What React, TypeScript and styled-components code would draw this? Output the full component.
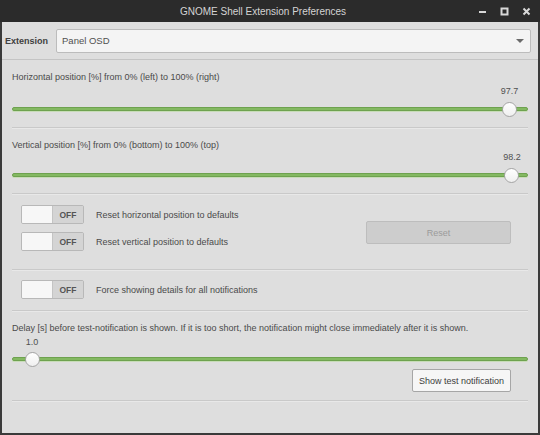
import styled, { createGlobalStyle } from "styled-components";

const Global = createGlobalStyle`
  html, body {
    margin: 0;
    padding: 0;
    background: #dedede;
  }
  * {
    box-sizing: border-box;
  }
`;

const Window = styled.div`
  width: 540px;
  height: 435px;
  display: flex;
  flex-direction: column;
  font-family: "Liberation Sans", Arial, sans-serif;
  color: #454545;
  overflow: hidden;
`;

const TitleBar = styled.div`
  height: 22px;
  flex: none;
  background: #2b2b2b;
  display: flex;
  align-items: center;
  position: relative;
`;

const Title = styled.div`
  flex: 1;
  text-align: center;
  padding-right: 14px;
  font-size: 10px;
  color: #d4d4d4;
`;

const WindowButtons = styled.div`
  position: absolute;
  right: 9px;
  top: 0;
  height: 22px;
  display: flex;
  align-items: center;
  gap: 13px;
`;

const WinIcon = styled.svg`
  display: block;
  width: 9px;
  height: 9px;
`;

const Body = styled.div`
  flex: 1;
  display: flex;
  flex-direction: column;
  border: 2px solid #3a3a3a;
  border-top: none;
  background: #dedede;
`;

const Header = styled.div`
  height: 38px;
  flex: none;
  display: flex;
  align-items: center;
  gap: 8px;
  padding: 0 7px 0 3px;
  border-bottom: 1px solid #c4c4c4;
`;

const HeaderLabel = styled.div`
  font-size: 9px;
  font-weight: bold;
  color: #404040;
`;

const Combo = styled.div`
  flex: 1;
  height: 24px;
  display: flex;
  align-items: center;
  justify-content: space-between;
  padding: 0 6px 0 5px;
  background: #f4f4f4;
  border: 1px solid #bcbcbc;
  border-radius: 2px;
  font-size: 9.5px;
  color: #505050;
`;

const Arrow = styled.span`
  width: 0;
  height: 0;
  border-left: 4px solid transparent;
  border-right: 4px solid transparent;
  border-top: 4px solid #6a6a6a;
`;

const Content = styled.div`
  padding: 0 10px;
  display: flex;
  flex-direction: column;
`;

const Section = styled.div<{ $top: number; $bottom: number; $indent?: number }>`
  padding: ${(p) => p.$top}px 0 ${(p) => p.$bottom}px ${(p) => p.$indent ?? 0}px;
  border-bottom: 1px solid #c9c9c9;
  box-shadow: 0 1px 0 #e8e8e8;
`;

const Label = styled.div`
  font-size: 9px;
  line-height: 12px;
  color: #4a4a4a;
  white-space: nowrap;
`;

const ScaleWrap = styled.div<{ $gap: number }>`
  position: relative;
  margin: 0 7px;
  padding-top: ${(p) => p.$gap}px;
`;

const ValueRow = styled.div`
  position: relative;
  height: 12px;
`;

const Value = styled.span`
  position: absolute;
  top: 0;
  transform: translateX(-50%);
  font-size: 9px;
  line-height: 12px;
  color: #505050;
`;

const TrackRow = styled.div<{ $gap: number }>`
  position: relative;
  height: 16px;
  margin-top: ${(p) => p.$gap}px;
`;

const Track = styled.div`
  position: absolute;
  left: -7px;
  right: -7px;
  top: 6px;
  height: 4px;
  background: #84b962;
  border: 1px solid #6ea24f;
  border-radius: 2px;
  box-shadow: 0 1px 0 #c8dcb8;
`;

const Thumb = styled.div`
  position: absolute;
  top: 1px;
  width: 15px;
  height: 15px;
  margin-left: -7.5px;
  border-radius: 50%;
  background: linear-gradient(#ffffff, #efefef);
  border: 1px solid #a4a4a4;
`;

const SwitchGrid = styled.div`
  display: flex;
  justify-content: space-between;
  align-items: flex-start;
  padding-right: 17px;
`;

const SwitchColumn = styled.div`
  display: flex;
  flex-direction: column;
  gap: 8px;
`;

const SwitchRow = styled.div`
  display: flex;
  align-items: center;
  gap: 12px;
`;

const Switch = styled.div`
  width: 63px;
  height: 19px;
  display: flex;
  border: 1px solid #b8b8b8;
  border-radius: 2px;
  overflow: hidden;
`;

const SwitchKnob = styled.div`
  width: 31px;
  background: #f7f7f7;
  border-right: 1px solid #c4c4c4;
`;

const SwitchState = styled.div`
  flex: 1;
  display: flex;
  align-items: center;
  justify-content: center;
  background: #d4d4d4;
  font-size: 8.5px;
  font-weight: bold;
  color: #555555;
`;

const Button = styled.button<{ $disabled?: boolean; $width: number }>`
  width: ${(p) => p.$width}px;
  height: 23px;
  padding: 0;
  font-family: inherit;
  font-size: 9px;
  border-radius: 2px;
  border: 1px solid ${(p) => (p.$disabled ? "#bdbdbd" : "#a6a6a6")};
  background: ${(p) => (p.$disabled ? "#cdcdcd" : "#f6f6f6")};
  color: ${(p) => (p.$disabled ? "#9b9b9b" : "#3c3c3c")};
`;

const ButtonRow = styled.div`
  display: flex;
  justify-content: flex-end;
  padding-right: 17px;
  margin-top: 2px;
`;

const ResetSlot = styled.div`
  margin-top: 16px;
`;

function Scale({ value, pct, labelGap, trackGap }: { value: string; pct: number; labelGap: number; trackGap: number }) {
  return (
    <ScaleWrap $gap={labelGap}>
      <ValueRow>
        <Value style={{ left: `${pct}%` }}>{value}</Value>
      </ValueRow>
      <TrackRow $gap={trackGap}>
        <Track />
        <Thumb style={{ left: `${pct}%` }} />
      </TrackRow>
    </ScaleWrap>
  );
}

function OffSwitch({ text }: { text: string }) {
  return (
    <SwitchRow>
      <Switch>
        <SwitchKnob />
        <SwitchState>OFF</SwitchState>
      </Switch>
      <Label>{text}</Label>
    </SwitchRow>
  );
}

export default function App() {
  return (
    <>
      <Global />
      <Window>
        <TitleBar>
          <Title>GNOME Shell Extension Preferences</Title>
          <WindowButtons>
            <WinIcon viewBox="0 0 9 9">
              <rect x="1" y="4" width="7" height="2" fill="#d8d8d8" />
            </WinIcon>
            <WinIcon viewBox="0 0 9 9">
              <rect x="1.5" y="1.5" width="6" height="6" fill="none" stroke="#d8d8d8" strokeWidth="2" />
            </WinIcon>
            <WinIcon viewBox="0 0 9 9">
              <path d="M1.5 1.5 L7.5 7.5 M7.5 1.5 L1.5 7.5" stroke="#d8d8d8" strokeWidth="2" />
            </WinIcon>
          </WindowButtons>
        </TitleBar>
        <Body>
          <Header>
            <HeaderLabel>Extension</HeaderLabel>
            <Combo>
              <span>Panel OSD</span>
              <Arrow />
            </Combo>
          </Header>
          <Content>
            <Section $top={11} $bottom={10}>
              <Label>Horizontal position [%] from 0% (left) to 100% (right)</Label>
              <Scale value="97.7" pct={97.7} labelGap={2} trackGap={4} />
            </Section>
            <Section $top={11} $bottom={10}>
              <Label>Vertical position [%] from 0% (bottom) to 100% (top)</Label>
              <Scale value="98.2" pct={98.2} labelGap={0} trackGap={4} />
            </Section>
            <Section $top={11} $bottom={18} $indent={9}>
              <SwitchGrid>
                <SwitchColumn>
                  <OffSwitch text="Reset horizontal position to defaults" />
                  <OffSwitch text="Reset vertical position to defaults" />
                </SwitchColumn>
                <ResetSlot>
                  <Button $disabled $width={145}>Reset</Button>
                </ResetSlot>
              </SwitchGrid>
            </Section>
            <Section $top={10} $bottom={11} $indent={9}>
              <OffSwitch text="Force showing details for all notifications" />
            </Section>
            <Section $top={11} $bottom={8}>
              <Label>
                Delay [s] before test-notification is shown. If it is too short, the notification might close immediately after it is shown.
              </Label>
              <Scale value="1.0" pct={2.6} labelGap={2} trackGap={3} />
              <ButtonRow>
                <Button $width={99}>Show test notification</Button>
              </ButtonRow>
            </Section>
          </Content>
        </Body>
      </Window>
    </>
  );
}
